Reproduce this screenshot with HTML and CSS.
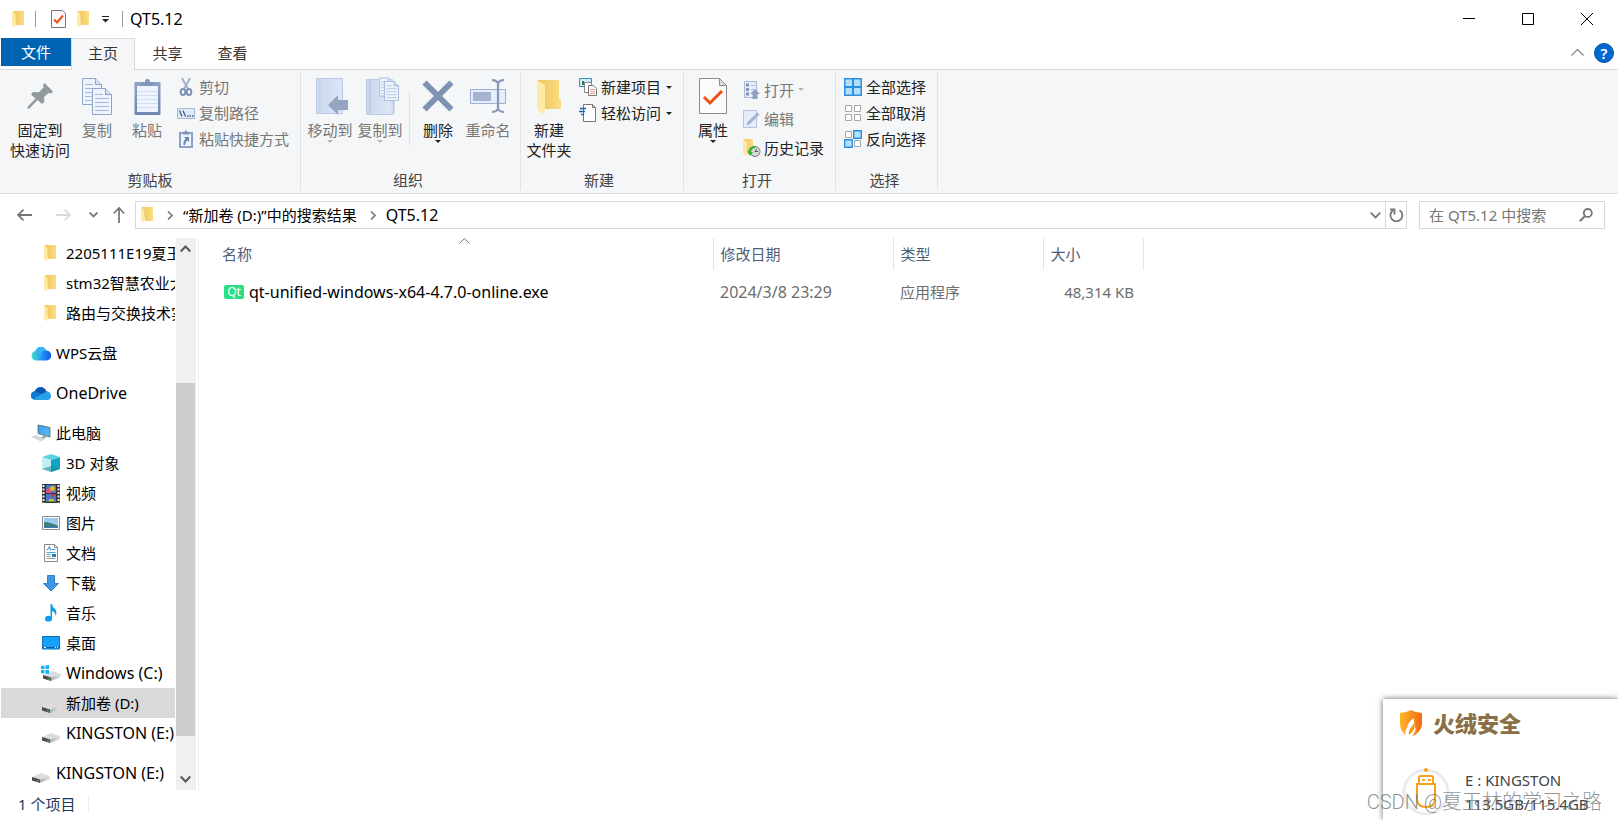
FILE: index.html
```html
<!DOCTYPE html>
<html lang="zh-CN">
<head>
<meta charset="utf-8">
<title>QT5.12</title>
<link rel="stylesheet" href="styles.css">
</head>
<body>
<svg class="defs" aria-hidden="true">
  <defs>
    <linearGradient id="gFold" x1="0" x2="1"><stop offset="0" stop-color="#eec55a"/><stop offset="1" stop-color="#fbdd83"/></linearGradient>
    <linearGradient id="gClip" x1="0" y1="0" x2="0" y2="1"><stop offset="0" stop-color="#8ea3c4"/><stop offset="1" stop-color="#6f88b2"/></linearGradient>
    <linearGradient id="gBook" x1="0" x2="1"><stop offset="0" stop-color="#ccd9ee"/><stop offset="1" stop-color="#dbe6f6"/></linearGradient>
    <linearGradient id="gDrive" x1="0" x2="1"><stop offset="0" stop-color="#b0b0b0"/><stop offset="1" stop-color="#e2e2e4"/></linearGradient>
    <linearGradient id="gWps" x1="0" x2="1"><stop offset="0" stop-color="#3fe0c8"/><stop offset=".55" stop-color="#2390f5"/><stop offset="1" stop-color="#0a5be8"/></linearGradient>
    <linearGradient id="gFire" x1="0" y1="0" x2="1" y2="0"><stop offset="0" stop-color="#ffb52e"/><stop offset="1" stop-color="#f36a10"/></linearGradient>
    <linearGradient id="gScreen" x1="0" y1="0" x2="1" y2="1"><stop offset="0" stop-color="#2f9df0"/><stop offset="1" stop-color="#62bdf8"/></linearGradient>
    <symbol id="folder" viewBox="0 0 12 18"><path d="M1 1h11v14H4z" fill="url(#gFold)"/><path d="M0 1l3.5 3v13.5L0 15z" fill="#ffe9a6"/></symbol>
    <symbol id="drive" viewBox="0 0 18 11"><path d="M0 5L9 1l9 3L8 8z" fill="#dcdcde"/><path d="M0 5l8 2.500V11L0 8.500z" fill="#4a4a4a"/><path d="M8 7.500l10-3.500V7L8 11z" fill="url(#gDrive)"/><path d="M5 8.600l2 .6" stroke="#3fc24b" stroke-width="1.200"/></symbol>
    <symbol id="props" viewBox="0 0 28 36"><path d="M.5.5h20l7 7v28H.5z" fill="#fbfbfb" stroke="#8c8c8c"/><path d="M20.500.5v7h7z" fill="#dcdcdc" stroke="#8c8c8c"/><path d="M5 19l6 6L23 13" fill="none" stroke="#ee5013" stroke-width="3"/></symbol>
    <symbol id="sheet" viewBox="0 0 20 27"><path d="M.5.5h13l6 6v20H.5z" fill="#eef4fd" stroke="#8fa5c9"/><path d="M13.500.5v6h6" fill="#d5e0f2" stroke="#8fa5c9"/><path d="M3 6.500h8M3 10.500h14M3 14.500h14M3 18.500h14M3 22.500h14" stroke="#a5b8d8"/></symbol>
  </defs>
</svg>
<div class="window">
  <header class="titlebar">
    <div class="quick">
      <svg class="q-folder" width="12" height="18"><use href="#folder"/></svg>
      <span class="bar"></span>
      <button class="plain q-props" aria-label="属性"><svg width="15" height="18" viewBox="0 0 15 18"><path d="M.5.5h11l3 3v14H.5z" fill="#fafafa" stroke="#777"/><path d="M3 9.500l3 3 6-7" fill="none" stroke="#ee5013" stroke-width="2"/></svg></button>
      <button class="plain q-new" aria-label="新建文件夹"><svg width="12" height="18"><use href="#folder"/></svg></button>
      <button class="plain q-more" aria-label="自定义快速访问工具栏"><svg width="7" height="7" viewBox="0 0 7 7"><path d="M0 .5h7" stroke="#222"/><path d="M0 3h7L3.500 6.500z" fill="#222"/></svg></button>
      <span class="bar"></span>
      <h1 class="title latin">QT5.12</h1>
    </div>
    <div class="winbtns">
      <button class="plain" aria-label="最小化"><svg width="12" height="12" viewBox="0 0 12 12"><path d="M0 5.500h12" stroke="#000"/></svg></button>
      <button class="plain" aria-label="最大化"><svg width="12" height="12" viewBox="0 0 12 12"><path d="M.5.5h11v11H.5z" fill="none" stroke="#000"/></svg></button>
      <button class="plain" aria-label="关闭"><svg width="12" height="12" viewBox="0 0 12 12"><path d="M0 0l12 12M12 0L0 12" stroke="#000"/></svg></button>
    </div>
  </header>

  <nav class="tabs">
    <button class="tab file">文件</button>
    <button class="tab active">主页</button>
    <button class="tab">共享</button>
    <button class="tab">查看</button>
    <span class="tabs-right">
      <button class="plain" aria-label="折叠功能区"><svg width="13" height="7" viewBox="0 0 13 7"><path d="M.5 6.500l6-6 6 6" fill="none" stroke="#888" stroke-width="1.300"/></svg></button>
      <button class="plain help" aria-label="帮助">?</button>
    </span>
  </nav>

  <section class="ribbon">
    <div class="group clip">
      <div class="tools">
        <button class="big wide"><span class="ico"><svg width="26" height="26" viewBox="0 0 26 26"><path d="M17.500 0L26 8.500l-2 2-2.500-.5-4.500 4 .5 4.500-2.500 2.500-4.500-4L2.500 25.500.5 26l.3-2.500L8.500 15.500l-4.500-4 2-2.500 6 .2 4.500-4.700L16 2z" fill="#919a9f"/></svg></span><span>固定到<br>快速访问</span></button>
        <button class="big dim"><span class="ico"><svg width="31" height="37" viewBox="0 0 31 37"><use href="#sheet" width="20" height="27"/><use href="#sheet" x="10" y="10" width="20" height="27"/></svg></span><span>复制</span></button>
        <button class="big dim"><span class="ico"><svg width="27" height="37" viewBox="0 0 27 37"><rect x=".5" y="4" width="26" height="33" rx="1" fill="url(#gClip)"/><path d="M3 8h21v26H3z" fill="#eef4fd"/><path d="M3 13.500h21M3 17.500h21M3 21.500h21M3 25.500h21M3 29.500h21" stroke="#d2def0"/><path d="M7 8V4h4a2.500 3 0 015 0h4v4z" fill="#8497b8"/></svg></span><span>粘贴</span></button>
        <div class="smalls">
          <button class="small dim"><svg width="18" height="18" viewBox="0 0 18 18"><path d="M5 0l6 11M13 0L7 11" stroke="#a3b2cb" stroke-width="2"/><ellipse cx="6" cy="14" rx="2.300" ry="3" fill="none" stroke="#7e93b8" stroke-width="2"/><ellipse cx="12" cy="14" rx="2.300" ry="3" fill="none" stroke="#7e93b8" stroke-width="2"/></svg><span>剪切</span></button>
          <button class="small dim"><svg width="18" height="18" viewBox="0 0 18 18"><path d="M.5 4.500h17v10H.5z" fill="#dfe9f8" stroke="#a9b9d4"/><path d="M2.500 6.500l2.500 6M6 6.500l2.500 6M10 12h1.500M12.500 12H14M15 12h1.500" stroke="#47628f" stroke-width="1.300"/></svg><span>复制路径</span></button>
          <button class="small dim"><svg width="18" height="18" viewBox="0 0 18 18"><path d="M3 3h12v14H3z" fill="#eef4fd" stroke="#8fa2c3" stroke-width="2"/><path d="M6 4.500V2h1.500a1.500 1.500 0 013 0H12v2.500z" fill="#7e93b8"/><path d="M7 7h5v5l-1.700-1.700Q8 12 8 15H6.500q-.5-4 2.200-6.300z" fill="#6a83ae"/></svg><span>粘贴快捷方式</span></button>
        </div>
      </div>
      <h2>剪贴板</h2>
    </div>

    <div class="group org">
      <div class="tools">
        <button class="big dim drop"><span class="ico"><svg width="38" height="37" viewBox="-4 0 38 37"><path d="M1.500.5h26v35h-26z" fill="url(#gBook)" stroke="#bccbe3"/><path d="M5 1v34" stroke="#c2d0e8"/><path d="M13 27l10-10v5h10v10H23v5z" fill="#94a5c4"/></svg></span><span>移动到</span></button>
        <button class="big dim drop"><span class="ico"><svg width="38" height="38" viewBox="-4 0 38 38"><path d="M1.500 2.500h26v35h-26z" fill="url(#gBook)" stroke="#bccbe3"/><path d="M5 3v34M26 24h3v12l-2 1.500" fill="#d2def0" stroke="#a9bbd8"/><use href="#sheet" x="14" y="0" width="14" height="20"/><use href="#sheet" x="19" y="4" width="15" height="20"/></svg></span><span>复制到</span></button>
        <span class="split"></span>
        <button class="big drop"><span class="ico"><svg width="32" height="32" viewBox="0 0 32 32"><path d="M2.500 2.500l27 27M29.500 2.500l-27 27" stroke="#7f92b4" stroke-width="6"/></svg></span><span>删除</span></button>
        <button class="big dim"><span class="ico"><svg width="36" height="36" viewBox="0 0 36 36"><path d="M.5 11.500h35v14H.5z" fill="#e6eefb" stroke="#9db0d0"/><path d="M3 14h18v9H3z" fill="#a3b3d0"/><path d="M22 2q4 0 6 3 2-3 6-3M22 34q4 0 6-3 2 3 6 3M28 4v28" fill="none" stroke="#8497b8" stroke-width="2.200"/></svg></span><span>重命名</span></button>
      </div>
      <h2>组织</h2>
    </div>

    <div class="group new">
      <div class="tools">
        <button class="big"><span class="ico"><svg width="24" height="35" viewBox="0 0 24 35"><path d="M1 1h21v18l2 2v9H7z" fill="url(#gFold)"/><path d="M0 1l8 5v28l-2 1-6-5z" fill="#ffe9a6"/></svg></span><span>新建<br>文件夹</span></button>
        <div class="smalls">
          <button class="small"><svg width="18" height="18" viewBox="0 0 18 18"><path d="M.5.5h12v8H.5z" fill="#cfeaf8" stroke="#3e8fb8"/><path d="M3 3h2v4H3z" fill="#2f7a5a"/><path d="M5.500 4.500h7v10h-7z" fill="#fff" stroke="#888"/><path d="M9.500 7.500h5l3 3v7h-8z" fill="#fff" stroke="#777"/><path d="M11 11.500h5M11 13.500h5M11 15.500h5" stroke="#e79a8e"/></svg><span>新建项目</span><i class="caret"></i></button>
          <button class="small"><svg width="18" height="18" viewBox="0 0 18 18"><path d="M4.500.5h9l3 3v14h-12z" fill="#fff" stroke="#777"/><path d="M13.500.5v3h3" fill="none" stroke="#777"/><path d="M1 4.500h6M0 7.500h6M2 10.500h3" stroke="#1e64a8" stroke-width="1.500"/></svg><span>轻松访问</span><i class="caret"></i></button>
        </div>
      </div>
      <h2>新建</h2>
    </div>

    <div class="group open">
      <div class="tools">
        <button class="big drop"><span class="ico"><svg width="28" height="36"><use href="#props"/></svg></span><span>属性</span></button>
        <div class="smalls loose">
          <button class="small dim"><svg width="18" height="18" viewBox="0 0 18 18"><path d="M1.500 .5h12v16h-12z" fill="#e6eefb" stroke="#a9b9d4"/><path d="M3 2.500h3v3H3zM3 7h3v3H3zM3 11.500h3v3H3z" fill="#7e93b8"/><path d="M8 4.500h4M8 8.500h3" stroke="#a9b9d4"/><path d="M12 8l5 5h-2.500v5h-5v-5H7z" fill="#8fa1c2"/></svg><span>打开</span><i class="caret"></i></button>
          <button class="small dim"><svg width="18" height="18" viewBox="0 0 18 18"><path d="M.5.5h13v17H.5z" fill="#e6eefb" stroke="#b4c3dc"/><path d="M3.500 15.500l1-3.500L14.500 2.500l2 2L7 14z" fill="#a3b3d0"/></svg><span>编辑</span></button>
          <button class="small"><svg width="18" height="18" viewBox="0 0 18 18"><path d="M1 0h9v15H3z" fill="url(#gFold)"/><path d="M0 0l4 3v14l-4-2z" fill="#ffe9a6"/><circle cx="12" cy="12.500" r="5" fill="#d9d9d9" stroke="#777"/><path d="M12 12.500l2-2.500M12 12.500h3" stroke="#555"/><path d="M12 7q-6 0-6.500 5.500L4 12l3 5 3-4-2-.2Q8.500 9.500 12 9z" fill="#3aae3a"/></svg><span>历史记录</span></button>
        </div>
      </div>
      <h2>打开</h2>
    </div>

    <div class="group select">
      <div class="tools">
        <div class="smalls">
          <button class="small"><svg width="18" height="18" viewBox="0 0 18 18"><path d="M0 0h18v18H0z" fill="#2d8fe0"/><path d="M1.500 1.500h6.500v6.500H1.500zM10 1.500h6.500v6.500H10zM1.500 10h6.500v6.500H1.500zM10 10h6.500v6.500H10z" fill="#b4dffc"/></svg><span>全部选择</span></button>
          <button class="small"><svg width="18" height="18" viewBox="0 0 18 18"><path d="M1.500 1.500h6v6h-6zM10.500 1.500h6v6h-6zM1.500 10.500h6v6h-6zM10.500 10.500h6v6h-6z" fill="#fff" stroke="#a6a6a6"/></svg><span>全部取消</span></button>
          <button class="small"><svg width="18" height="18" viewBox="0 0 18 18"><path d="M1.500 1.500h6v6h-6zM10.500 10.500h6v6h-6z" fill="#fff" stroke="#a6a6a6"/><path d="M9.700.7h7.600v7.600H9.700zM.7 9.700h7.600v7.600H.7z" fill="#b4dffc" stroke="#2d8fe0" stroke-width="1.400"/></svg><span>反向选择</span></button>
        </div>
      </div>
      <h2>选择</h2>
    </div>
  </section>

  <div class="location">
    <div class="navbtns">
      <button class="plain n1" aria-label="后退"><svg width="15" height="12" viewBox="0 0 15 12"><path d="M15 6H1M6.500.7L1 6l5.500 5.300" fill="none" stroke="#777" stroke-width="1.800"/></svg></button>
      <button class="plain n2" aria-label="前进"><svg width="15" height="12" viewBox="0 0 15 12"><path d="M0 6h14M8.500.7L14 6l-5.500 5.300" fill="none" stroke="#dadada" stroke-width="1.800"/></svg></button>
      <button class="plain n3" aria-label="最近浏览的位置"><svg width="9" height="6" viewBox="0 0 9 6"><path d="M.5.5l4 4 4-4" fill="none" stroke="#777" stroke-width="1.800"/></svg></button>
      <button class="plain n4" aria-label="上移"><svg width="12" height="16" viewBox="0 0 12 16"><path d="M6 16V1M.7 6.500L6 1l5.300 5.500" fill="none" stroke="#777" stroke-width="1.800"/></svg></button>
    </div>
    <div class="address">
      <svg class="a-folder" width="12" height="18"><use href="#folder"/></svg>
      <svg class="chev" width="6" height="9" viewBox="0 0 6 9"><path d="M1 .5l4 4-4 4" fill="none" stroke="#777" stroke-width="1.600"/></svg>
      <a href="#">“新加卷 (D:)”中的搜索结果</a>
      <svg class="chev" width="6" height="9" viewBox="0 0 6 9"><path d="M1 .5l4 4-4 4" fill="none" stroke="#777" stroke-width="1.600"/></svg>
      <a class="latin" href="#">QT5.12</a>
      <button class="plain a-drop" aria-label="以前的位置"><svg width="11" height="7" viewBox="0 0 11 7"><path d="M.7.7l4.800 4.800L10.300.7" fill="none" stroke="#777" stroke-width="1.800"/></svg></button>
      <button class="plain a-refresh" aria-label="刷新"><svg width="15" height="15" viewBox="0 0 15 15"><path d="M10.500 2.200a6 6 0 11-6.500.2" fill="none" stroke="#777" stroke-width="1.800"/><path d="M1 1.500h4.500V6.500" fill="none" stroke="#777" stroke-width="1.800"/></svg></button>
    </div>
    <form class="search">
      <input type="text" aria-label="搜索" placeholder="在 QT5.12 中搜索">
      <button class="plain" type="button" aria-label="开始搜索"><svg width="14" height="14" viewBox="0 0 14 14"><circle cx="8.800" cy="5" r="4" fill="none" stroke="#777" stroke-width="1.800"/><path d="M6 8L.8 13.200" stroke="#777" stroke-width="2"/></svg></button>
    </form>
  </div>

  <main class="body">
    <aside class="side">
      <ul class="tree">
        <li><a class="row sub" href="#"><span class="ti fo"><svg width="12" height="18"><use href="#folder"/></svg></span>2205111E19夏玉林</a></li>
        <li><a class="row sub" href="#"><span class="ti fo"><svg width="12" height="18"><use href="#folder"/></svg></span>stm32智慧农业大棚</a></li>
        <li><a class="row sub" href="#"><span class="ti fo"><svg width="12" height="18"><use href="#folder"/></svg></span>路由与交换技术实验</a></li>
        <li class="gap"><a class="row" href="#"><span class="ti"><svg width="20" height="15" viewBox="0 0 20 15"><path d="M5 14.500a4.800 4.800 0 01-.5-9.500A5.600 5.600 0 0115 4.500a5 5 0 01.500 10z" fill="url(#gWps)"/><path d="M4.500 5A5.600 5.600 0 0115 4.500q-5 .5-6 5Q7.500 6 4.500 5z" fill="#35b5f6"/></svg></span>WPS云盘</a></li>
        <li class="gap"><a class="row latin" href="#"><span class="ti"><svg width="20" height="13" viewBox="0 0 20 13"><path d="M4.500 13A4.500 4.500 0 014 4a6 6 0 0111.300.5A4.300 4.300 0 0116 13z" fill="#0f78d4"/><path d="M4 4a6 6 0 0111.300.5L11 7z" fill="#0a58ad"/><path d="M2 12l9-5 5-2.500a4.300 4.300 0 01.5 8.500H4.500Q3 13 2 12z" fill="#28a3ea"/></svg></span>OneDrive</a></li>
        <li class="gap"><a class="row" href="#"><span class="ti"><svg width="20" height="18" viewBox="0 0 20 18"><path d="M7 1l12 2.500v9.500L7 9.500z" fill="url(#gScreen)" stroke="#566" stroke-width=".8"/><path d="M13 12l-4 2 3 1 4-2z" fill="#999"/><path d="M0 13l5-2 9 4-4 2.500z" fill="#d5d9dc"/></svg></span>此电脑</a></li>
        <li><a class="row sub" href="#"><span class="ti"><svg width="18" height="18" viewBox="0 0 18 18"><path d="M0 3l9 3v12l-9-3z" fill="#c3edf0"/><path d="M18 3L9 6v12l9-3z" fill="#12a5c2"/><path d="M0 3l9-3 9 3-9 3z" fill="#5fd3dd"/><path d="M9 12l9 3-9 3-9-3z" fill="#0f8ba3" opacity=".55"/></svg></span>3D 对象</a></li>
        <li><a class="row sub" href="#"><span class="ti"><svg width="18" height="19" viewBox="0 0 18 19"><path d="M0 0h18v19H0z" fill="#333"/><path d="M4 1h10v8H4zM4 10h10v8H4z" fill="#4a78d0"/><path d="M4 6l3-2 2 2v3H4z" fill="#e2527e"/><circle cx="10.500" cy="4.500" r="2.500" fill="#e6b62c"/><path d="M9 10h4l-2 4z" fill="#d8302c"/><path d="M7 15h5v2H7z" fill="#e6b62c"/><path d="M4 17h10v1H4z" fill="#4f9a3c"/><path d="M1.500 1v18M16.500 1v18" stroke="#eee" stroke-width="2" stroke-dasharray="2 1.500"/></svg></span>视频</a></li>
        <li><a class="row sub" href="#"><span class="ti"><svg width="18" height="14" viewBox="0 0 18 14"><path d="M.5.5h17v13H.5z" fill="#fff" stroke="#8c8c8c"/><path d="M2 2h14v10H2z" fill="#9cc9f0"/><path d="M2 6q6 0 14 4v2H2z" fill="#3c7f74"/><path d="M2 11h14v1H2z" fill="#3d78c4"/></svg></span>图片</a></li>
        <li><a class="row sub" href="#"><span class="ti"><svg width="14" height="18" viewBox="0 0 14 18"><path d="M.5.5h10l3 3v14H.5z" fill="#fff" stroke="#8a8a8a"/><path d="M10.500.5v3h3" fill="none" stroke="#8a8a8a"/><path d="M3 6.500l2.500-4 1 4" fill="none" stroke="#1e8fd6"/><path d="M7.500 5.500h4M2.500 8.500h9M2.500 10.500h4" stroke="#48a7e0"/><path d="M8 10h4v3H8z" fill="#2f79b5"/><path d="M2.500 12.500h4M2.500 14.500h9" stroke="#999"/></svg></span>文档</a></li>
        <li><a class="row sub" href="#"><span class="ti"><svg width="16" height="17" viewBox="0 0 16 17"><path d="M4.500.5h7v8h4L8 16 .5 8.500h4z" fill="#3f97e4" stroke="#2f7fc8"/></svg></span>下载</a></li>
        <li><a class="row sub" href="#"><span class="ti"><svg width="12" height="18" viewBox="0 0 12 18"><ellipse cx="3.500" cy="14.700" rx="3.500" ry="2.900" fill="#0b9ceb"/><path d="M5.500 0h1.500q.3 3 3 5 2.500 3 .5 7Q10.500 8 7 7v8H5.500z" fill="#0b9ceb"/></svg></span>音乐</a></li>
        <li><a class="row sub" href="#"><span class="ti"><svg width="18" height="14" viewBox="0 0 18 14"><path d="M.5.500h17v12.500H.5z" fill="#17a0fb" stroke="#0c74bd"/><path d="M1 11.500h16" stroke="#0b5e9e"/><path d="M2 11.500h2M13 11.500h1M15 11.500h1" stroke="#fff"/></svg></span>桌面</a></li>
        <li><a class="row sub latin" href="#"><span class="ti"><svg width="20" height="16" viewBox="0 0 20 16"><use href="#drive" x="2" y="5" width="18" height="11"/><path d="M0 1l3.500-.5V4H0zM4.500.5L8 0v4H4.500zM0 5h3.500v3.500L0 8zM4.500 5H8v4l-3.500-.5z" fill="#12b1f0"/></svg></span>Windows (C:)</a></li>
        <li><a class="row sub current" href="#"><span class="ti low"><svg width="18" height="11"><use href="#drive"/></svg></span>新加卷 (D:)</a></li>
        <li><a class="row sub latin" href="#"><span class="ti low"><svg width="18" height="11"><use href="#drive"/></svg></span>KINGSTON (E:)</a></li>
        <li class="gap"><a class="row latin" href="#"><span class="ti low"><svg width="18" height="11"><use href="#drive"/></svg></span>KINGSTON (E:)</a></li>
      </ul>
      <div class="scroll">
        <button class="plain" aria-label="向上滚动"><svg width="11" height="8" viewBox="0 0 11 8"><path d="M.7 6.500l4.800-5 4.800 5" fill="none" stroke="#555" stroke-width="2"/></svg></button>
        <div class="track"><div class="thumb"></div></div>
        <button class="plain" aria-label="向下滚动"><svg width="11" height="8" viewBox="0 0 11 8"><path d="M.7 1.500l4.800 5 4.800-5" fill="none" stroke="#555" stroke-width="2"/></svg></button>
      </div>
    </aside>
    <section class="files">
      <table>
        <colgroup><col class="c-name"><col class="c-date"><col class="c-type"><col class="c-size"></colgroup>
        <thead><tr><th>名称<svg class="sort" width="11" height="6" viewBox="0 0 11 6"><path d="M.5 5.500l5-5 5 5" fill="none" stroke="#777"/></svg></th><th>修改日期</th><th>类型</th><th>大小</th></tr></thead>
        <tbody><tr><td><span class="fname latin"><span class="qt">Qt</span>qt-unified-windows-x64-4.7.0-online.exe</span></td><td class="latin">2024/3/8 23:29</td><td>应用程序</td><td class="num">48,314 KB</td></tr></tbody>
      </table>
    </section>
  </main>
  <footer class="status"><span>1 个项目</span></footer>

  <aside class="toast">
    <div class="brand">
      <svg width="24" height="26" viewBox="0 0 24 26"><path d="M1 3q6 0 11-3 5 3 11 3v11q0 6-7 11l-3 1q5-5 3-9-1-3-1-9-6 4-7 10-3 3-1 7-6-4-6-11z" fill="url(#gFire)"/><path d="M10 25q-1-5 3-9 2-2 2-4 3 7-5 13z" fill="#f99a1c"/></svg>
      <strong>火绒安全</strong>
    </div>
    <div class="usb">
      <svg width="48" height="48" viewBox="0 0 48 48"><circle cx="24" cy="24" r="22" fill="#fff" stroke="#ebebeb" stroke-width="3"/><path d="M17 16V9.500q0-1.500 1.500-1.500h11q1.500 0 1.500 1.500V16M15 16h18v15q0 8-9 8t-9-8z" fill="none" stroke="#f9a11b" stroke-width="2"/><path d="M20 12h3M26 12h3" stroke="#f9a11b" stroke-width="2"/><circle cx="24" cy="2" r="2" fill="#f9a11b"/></svg>
      <p>E : KINGSTON<br>113.5GB/115.4GB</p>
    </div>
  </aside>
  <div class="mark">CSDN @夏玉林的学习之路</div>
</div>
</body>
</html>
```

FILE: styles.css
```css
* { box-sizing: border-box; }
body {
  margin: 0;
  background: #fff;
  color: #000;
  font: 15px/20px "Noto Sans", "Noto Sans CJK SC", sans-serif;
}
h1, h2, p, ul { margin: 0; padding: 0; font-weight: 400; }
ul { list-style: none; }
a { color: inherit; text-decoration: none; }
button, input { font: inherit; color: inherit; }
button { border: 0; padding: 0; background: none; white-space: nowrap; }
svg { display: block; flex: none; }
.defs { position: absolute; width: 0; height: 0; }
.plain { display: flex; align-items: center; justify-content: center; }
.latin { font-size: 16px; }

.window {
  position: relative;
  display: flex;
  flex-direction: column;
  height: 100vh;
  overflow: hidden;
}

.titlebar { display: flex; justify-content: space-between; height: 38px; flex: none; }
.quick { display: flex; align-items: center; padding-left: 12px; }
.bar { width: 1px; height: 16px; background: #999; }
.q-folder { margin-right: 11px; }
.q-props { margin-left: 15px; }
.q-new { margin-left: 11px; }
.q-more { margin: 0 13px; }
.title { margin-left: 7px; }
.winbtns { display: flex; padding-right: 2px; }
.winbtns .plain { width: 59px; }

.tabs {
  display: flex;
  flex: none;
  height: 32px;
  padding-left: 1px;
  border-bottom: 1px solid #d9dadb;
  color: #333;
}
.tab { width: 65px; height: 31px; padding-bottom: 2px; }
.tab.file { width: 70px; height: 28px; padding-bottom: 0; background: #0063b1; color: #fff; }
.tab.active {
  width: 64px;
  height: 32px;
  padding-bottom: 4px;
  border: 1px solid #d9dadb;
  border-bottom: 0;
  background: #f5f6f7;
}
.tabs-right { display: flex; align-items: center; gap: 10px; margin-left: auto; padding: 0 4px 2px 0; }
.help {
  width: 20px;
  height: 20px;
  border: 1px solid #0a549c;
  border-radius: 50%;
  background: #0067d0;
  color: #fff;
  font-weight: 600;
}

.ribbon {
  display: flex;
  flex: none;
  height: 124px;
  padding: 2px 0 3px 1px;
  border-bottom: 1px solid #d9dadb;
  background: #f5f6f7;
  color: #222;
}
.group { display: flex; flex-direction: column; border-right: 1px solid #e2e3e4; }
.clip { width: 300px; padding-left: 8px; }
.org { width: 220px; padding-left: 4px; }
.new { width: 163px; padding-left: 3px; }
.open { width: 152px; padding-left: 4px; }
.select { width: 102px; padding-left: 8px; }
.group h2 { padding-right: 9px; font-size: 15px; text-align: center; color: #444; }
.select h2 { padding-right: 12px; }
.tools { display: flex; flex: 1; align-items: flex-start; }
.big {
  display: flex;
  flex-direction: column;
  align-items: center;
  width: 50px;
  padding-top: 4px;
  line-height: 20px;
}
.big.wide { width: 62px; }
.wide + .big { margin-left: 1px; }
.ico { display: flex; align-items: center; justify-content: center; height: 40px; margin-bottom: 4px; }
.dim { color: #767676; }
.drop::after, .caret {
  content: "";
  border: 4px solid transparent;
  border-top-color: #222;
  border-bottom: 0;
}
.drop::after { border-width: 3px 3px 0; }
.drop.dim::after, .dim .caret { border-top-color: #b5b5b5; }
.split { width: 1px; height: 54px; margin: 19px 3px 0 4px; background: #e0e1e2; }
.smalls { display: flex; flex-direction: column; padding: 2px 0 0 5px; }
.select .smalls { padding-left: 0; }
.small { display: flex; align-items: center; gap: 4px; height: 26px; }
.loose { padding-top: 3px; }
.loose .small { height: 29px; gap: 3px; }
.small .caret { border-width: 3px 3px 0; margin-left: 1px; }

.location { display: flex; flex: none; height: 44px; padding: 7px 13px 9px 0; }
.navbtns { display: flex; width: 135px; padding-left: 17px; }
.n2 { margin-left: 24px; }
.n3 { margin-left: 18px; }
.n4 { margin-left: 15px; }
.address {
  display: flex;
  flex: 1;
  align-items: center;
  border: 1px solid #d9d9d9;
  padding-left: 5px;
}
.chev { margin: 0 10px 0 14px; }
.address a + .chev { margin: 0 10px 0 13px; }
.address a { margin-bottom: 1px; }
.a-drop { width: 20px; height: 100%; margin-left: auto; }
.a-refresh { width: 21px; height: 100%; border-left: 1px solid #d9d9d9; }
.search { display: flex; width: 186px; margin-left: 12px; border: 1px solid #d9d9d9; }
.search input { flex: 1; min-width: 0; border: 0; padding: 0 0 0 9px; outline: 0; background: none; }
.search input::placeholder { color: #767676; opacity: 1; }
.search button { width: 36px; }

.body { display: flex; flex: 1; min-height: 0; }
.side { display: flex; flex: none; width: 199px; padding-left: 1px; border-right: 1px solid #f0f0f0; }
.tree { width: 174px; overflow: hidden; }
.row { display: flex; align-items: center; height: 30px; padding-left: 30px; white-space: nowrap; }
.sub { padding-left: 40px; }
.gap { margin-top: 10px; }
.current { background: #d9d9d9; }
.ti { display: flex; align-items: center; justify-content: center; flex: none; width: 20px; margin-right: 5px; }
.fo { padding-right: 2px; }
.low { padding-top: 8px; }
.scroll { display: flex; flex-direction: column; width: 20px; margin-left: 1px; background: #f0f0f0; }
.scroll .plain { height: 22px; padding-right: 2px; }
.track { flex: 1; padding: 123px 1px 0 0; }
.thumb { height: 353px; background: #cdcdcd; }

.files { flex: 1; }
table { width: 944px; table-layout: fixed; border-collapse: collapse; }
.c-name { width: 514px; }
.c-date { width: 180px; }
.c-type { width: 150px; }
.c-size { width: 100px; }
th, td { padding: 0 9px 0 7px; text-align: left; font-weight: 400; white-space: nowrap; }
th { position: relative; height: 32px; border-right: 1px solid #e5e5e5; color: #4c607a; }
td { height: 44px; color: #6d6d6d; }
th:first-child, td:first-child { padding-left: 23px; }
.sort { position: absolute; left: 260px; top: 0; }
.fname { display: flex; align-items: center; gap: 5px; padding-left: 2px; color: #000; }
.qt {
  width: 20px;
  height: 14px;
  border-radius: 2px;
  background: #2cde85;
  color: #fff;
  font-size: 12px;
  line-height: 13px;
  text-align: center;
}
td.num { text-align: right; }

.status { display: flex; align-items: center; flex: none; height: 30px; padding: 0 0 2px 18px; color: #1e395b; }
.status span { padding-right: 13px; border-right: 1px solid #eee; line-height: 16px; }

.toast {
  position: absolute;
  right: 0;
  bottom: 0;
  width: 235px;
  padding: 11px 0 4px 16px;
  background: #fff;
  box-shadow: 0 0 6px rgba(0, 0, 0, .6);
}
.brand { display: flex; align-items: center; gap: 10px; }
.brand strong { color: #8a7046; font-size: 22px; line-height: 26px; font-weight: 900; }
.usb { display: flex; gap: 15px; padding: 32px 0 0 3px; }
.usb p { color: #444; line-height: 24px; white-space: nowrap; }
.mark {
  position: absolute;
  right: 16px;
  bottom: 5px;
  color: rgba(110, 110, 110, .75);
  font: 300 20px/26px Roboto, "Noto Sans CJK SC", sans-serif;
  white-space: nowrap;
}
```
